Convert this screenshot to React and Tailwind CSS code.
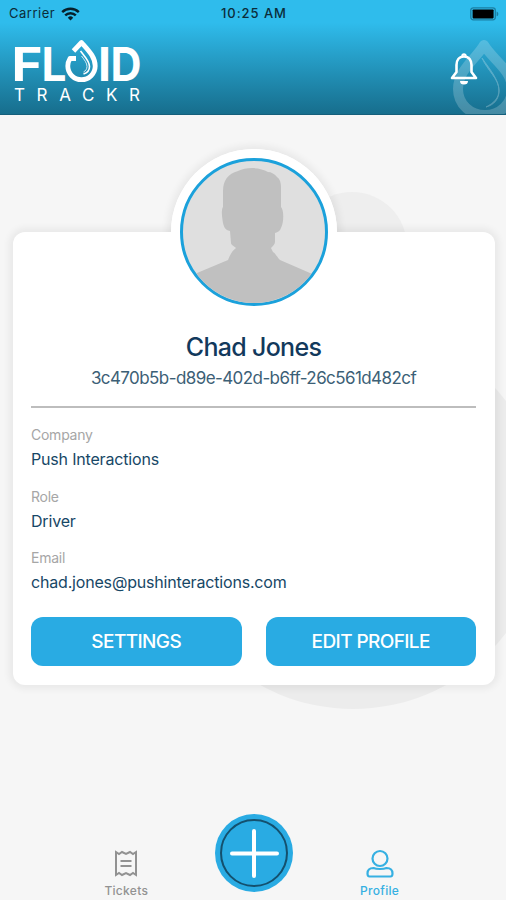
import React from "react";

const details = [
  { label: "Company", value: "Push Interactions" },
  { label: "Role", value: "Driver" },
  { label: "Email", value: "chad.jones@pushinteractions.com" },
];

function StatusBar() {
  return (
    <div className="grid h-[27px] grid-cols-3 items-center pl-[9px] pr-[7px] text-[13px] text-[#0b2c3a]">
      <div className="flex items-center gap-[6px]">
        <span className="tracking-[0.5px]">Carrier</span>
        <svg width="19" height="14" viewBox="0 0 19 14" fill="none" stroke="#06202b" strokeWidth="2.4">
          <path d="M1.2 5.2a11.8 11.8 0 0 1 16.6 0" />
          <path d="M4.2 8.4a7.5 7.5 0 0 1 10.6 0" />
          <path d="M9.5 13.4 6.8 10.7a3.8 3.8 0 0 1 5.4 0z" fill="#06202b" stroke="none" />
        </svg>
      </div>
      <span className="text-center font-medium tracking-[0.95px]">10:25 AM</span>
      <div className="flex justify-end">
        <svg width="29" height="14" viewBox="0 0 29 14">
          <rect x="0.8" y="0.8" width="24.5" height="12" rx="2.5" fill="none" stroke="#1b7fa3" strokeWidth="1.3" />
          <rect x="2.6" y="2.4" width="21" height="9" rx="0.8" fill="#000" />
          <path d="M26.6 4.5v4.8c1.2-.5 1.7-1.3 1.7-2.4s-.5-1.9-1.7-2.4z" fill="#1b7fa3" />
        </svg>
      </div>
    </div>
  );
}

function Logo() {
  return (
    <svg className="overflow-visible" width="132" height="66" viewBox="0 0 132 66" fill="#fff" fontFamily="Inter, sans-serif">
      <g fontSize="46.5" fontWeight="700">
        <text x="-1.5" y="42" textLength="31" lengthAdjust="spacingAndGlyphs">F</text>
        <text x="28.500" y="42" textLength="25" lengthAdjust="spacingAndGlyphs">L</text>
        <text x="85" y="42" textLength="13" lengthAdjust="spacingAndGlyphs">I</text>
        <text x="97.500" y="42" textLength="31" lengthAdjust="spacingAndGlyphs">D</text>
      </g>
      <path
        d="M60.500 12 68.500 3.500c7.500 8.500 13.700 14.500 13.700 23.500a13.700 13.700 0 0 1-27.400 0c0-3 .8-5.200 2.200-7.500h6"
        fill="none"
        stroke="#fff"
        strokeWidth="4.800"
        strokeLinejoin="round"
      />
      <path d="M67.500 12c4.500 6 9 10 9 15.500 0 3.800-2.500 6.500-6 7.500" fill="none" stroke="#fff" strokeWidth="1.6" />
      <path d="M68.500 17c3 4 5.500 7 5.500 10.500 0 2.500-1.500 4.500-3.500 5.500" fill="none" stroke="#fff" strokeWidth="0.8" />
      <text x="1" y="61.500" fontSize="17" textLength="126" lengthAdjust="spacing">
        TRACKR
      </text>
    </svg>
  );
}

function Bell() {
  return (
    <svg width="28" height="32" viewBox="0 0 28 32" fill="none" stroke="#fff" strokeWidth="2.6" strokeLinejoin="round">
      <path d="M14 3.500c-5 0-7.500 3.800-7.500 8.500v7L2 25h24l-4.500-6v-7c0-4.700-2.500-8.500-7.500-8.500z" />
      <path d="M12.300 3a1.700 1.700 0 0 1 3.400 0" strokeWidth="2" />
      <path d="M10 28a4 3.500 0 0 0 8 0z" fill="#fff" stroke="none" />
    </svg>
  );
}

function Header() {
  return (
    <header className="relative h-[115px] overflow-hidden border-b border-[#155f7b] bg-linear-to-b from-[#2fbcec] from-20% to-[#176e8d]">
      <svg className="absolute top-[36px] right-0" width="56" height="79" viewBox="0 0 56 79" fill="none" stroke="#fff">
        <path
          d="M34 9C26 23 8 34 8 53c0 15 12 26 27 26s27-11 27-26C62 34 42 23 34 9z"
          strokeWidth="10"
          strokeLinejoin="round"
          opacity=".2"
        />
        <path d="M32 22c5 12 17 21 17 32 0 8-5 13-13 17 8-2 13-8 13-16 0-11-8-20-17-33z" fill="#fff" strokeWidth="1" opacity=".25" />
      </svg>
      <div className="relative">
        <StatusBar />
        <div className="flex justify-between pt-[12px] pl-[13px] pr-[28px]">
          <Logo />
          <div className="pt-[14px]">
            <Bell />
          </div>
        </div>
      </div>
    </header>
  );
}

function Avatar() {
  return (
    <div className="size-[148px] overflow-hidden rounded-full border-[3px] border-[#1ba1db] bg-[#dfdfdf]">
      <svg width="142" height="142" viewBox="0 0 142 142" fill="#c0c0c0">
        <path d="M40 46V30c0-11 5-17 15-20 8-4 22-4 30 1 3 0 7 2 9 5 3 2 4 6 4 10v20c3 3 3 15 0 21-1 3-3 4-6 5v9c0 2-2 4-4 6l2 4c3 2 4 5 7 8l30 13 20 10v25H-5v-25l19-10 31-13c2-5 4-9 8-12-2-2-5-3-5-5l-1-12c-5-1-6-4-7-8-1-6-2-13 0-16z" />
      </svg>
    </div>
  );
}

function ProfileCard() {
  return (
    <section className="relative mt-[117px] mr-[11px] ml-[13px]">
      {/* halo sits twice: once behind the card for the shadow, once inside it */}
      <div className="absolute -top-[83px] left-1/2 size-[166px] -translate-x-1/2 rounded-full bg-white shadow-[0_0_7px_4px_rgba(0,0,0,0.055)]" />
      <div className="relative h-[453px] rounded-xl bg-white pr-[19px] pl-[18px] shadow-[0_0_7px_4px_rgba(0,0,0,0.055)]">
        <div className="absolute -top-[83px] left-1/2 size-[166px] -translate-x-1/2 rounded-full bg-white p-[9px]">
          <Avatar />
        </div>
        <div className="pt-[97px] text-center">
          <h1 className="text-[25px] leading-[36px] font-medium tracking-[-0.7px] text-[#12395c]">Chad Jones</h1>
          <p className="text-[17px] leading-[26px] tracking-[-0.58px] text-[#3c6076]">3c470b5b-d89e-402d-b6ff-26c561d482cf</p>
        </div>
        <hr className="mt-[15px] border-t-2 border-[#bdbdbd]" />
        <dl className="pt-[16px]">
          {details.map((item) => (
            <div key={item.label} className="h-[61.500px]">
              <dt className="text-[14px] leading-[22px] tracking-[-0.25px] text-[#a6a6a6]">{item.label}</dt>
              <dd className="text-[16px] leading-[26px] tracking-[-0.18px] text-[#174766]">{item.value}</dd>
            </div>
          ))}
        </dl>
        <div className="mt-[8px] grid grid-cols-2 gap-6">
          <button className="h-[49px] rounded-xl bg-[#29abe3] pt-[2px] text-[19px] font-medium tracking-[-0.6px] text-white">SETTINGS</button>
          <button className="h-[49px] rounded-xl bg-[#29abe3] pt-[2px] text-[19px] font-medium tracking-[-0.6px] text-white">EDIT PROFILE</button>
        </div>
      </div>
    </section>
  );
}

function TabBar() {
  return (
    <nav className="mt-auto grid h-[86px] grid-cols-3 px-[63px] text-[12px] font-medium">
      <div className="flex flex-col items-center pt-[36px] text-[#929292]">
        <svg width="24" height="27" viewBox="0 0 24 27" fill="none" stroke="currentColor" strokeWidth="2">
          <path d="M2 2l3 2 3-2 4 2 4-2 3 2 3-2v23l-3-2-3 2-4-2-4 2-3-2-3 2z" />
          <path d="M6.500 11h11M6.500 16h11" />
        </svg>
        <span className="mt-[6px] leading-[16px] tracking-[0.3px]">Tickets</span>
      </div>
      <div className="flex justify-center">
        <svg className="ml-[2px]" width="78" height="78" viewBox="0 0 78 78">
          <circle cx="39" cy="39" r="39" fill="#29abe3" />
          <circle cx="39" cy="39" r="33" fill="none" stroke="#14506e" strokeWidth="2" />
          <path d="M39 17v45M17 39.500h45" stroke="#fff" strokeWidth="4" strokeLinecap="round" />
        </svg>
      </div>
      <div className="flex flex-col items-center pt-[35px] text-[#36b0e2]">
        <svg width="28" height="29" viewBox="0 0 28 29" fill="none" stroke="currentColor" strokeWidth="2.2">
          <circle cx="14" cy="9.500" r="7.500" />
          <path d="M1.500 24.500c0-4 2-5.500 6-5.500 3 1.300 10 1.300 13 0 4 0 6 1.500 6 5.500 0 2-.5 3-2 3h-21c-1.500 0-2-1-2-3z" />
        </svg>
        <span className="mt-[5px] leading-[16px] tracking-[0.3px]">Profile</span>
      </div>
    </nav>
  );
}

function App() {
  return (
    <div className="relative flex h-[900px] w-[506px] flex-col overflow-hidden bg-[#f6f6f6] font-['Inter',sans-serif]">
      <div className="absolute top-[192px] left-[297px] size-[110px] rounded-full bg-[#eeeeee]" />
      <div className="absolute top-[325px] left-[161px] size-[384px] rounded-full bg-[#ececec]" />
      <Header />
      <ProfileCard />
      <TabBar />
    </div>
  );
}

export default App;
